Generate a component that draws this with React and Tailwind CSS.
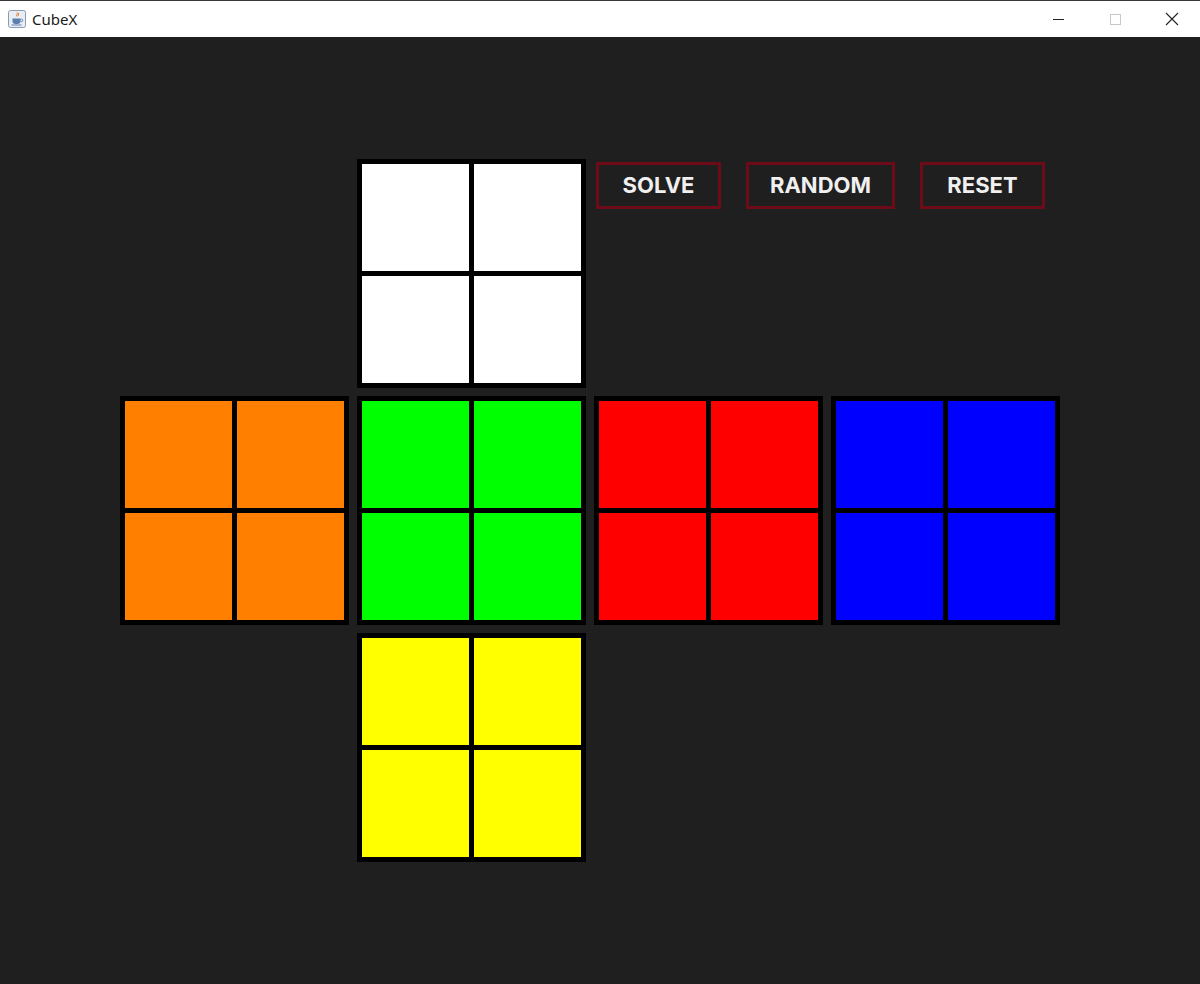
import React from 'react';

const faces = [
  { color: 'bg-[#ffffff]', col: 'col-start-2', row: 'row-start-1' },
  { color: 'bg-[#ff8000]', col: 'col-start-1', row: 'row-start-2' },
  { color: 'bg-[#00ff00]', col: 'col-start-2', row: 'row-start-2' },
  { color: 'bg-[#ff0000]', col: 'col-start-3', row: 'row-start-2' },
  { color: 'bg-[#0000ff]', col: 'col-start-4', row: 'row-start-2' },
  { color: 'bg-[#ffff00]', col: 'col-start-2', row: 'row-start-3' },
];

const Face = ({ color, col, row }) => (
  <div className={`${col} ${row} grid grid-cols-2 grid-rows-2 gap-[5px] bg-black p-[5px]`}>
    {[0, 1, 2, 3].map((i) => (
      <div key={i} className={`${color}`} />
    ))}
  </div>
);

const JavaIcon = () => (
  <svg width="18" height="18" viewBox="0 0 18 18">
    <rect x="0.5" y="0.5" width="17" height="17" rx="2" fill="#e9eef5" stroke="#8a9bb0" />
    <path d="M9 2.5c1.5 1.5-1.5 2.5 0 4M10.5 3c1 1-1 2 0 3" stroke="#e07020" strokeWidth="1" fill="none" />
    <path d="M4.5 8.5h8v2.5a3 3 0 0 1-3 3h-2a3 3 0 0 1-3-3z" fill="#5b7fb0" />
    <path d="M12.5 9.2h1a1.2 1.2 0 0 1 0 2.4h-1" stroke="#5b7fb0" strokeWidth="1" fill="none" />
    <path d="M3.5 15h10" stroke="#5b7fb0" strokeWidth="1" />
  </svg>
);

export default function App() {
  return (
    <div className="flex h-[984px] w-[1200px] flex-col overflow-hidden bg-[#1f1f1f] font-['Inter',sans-serif]">
      {/* Title bar */}
      <div className="flex h-[37px] shrink-0 items-center justify-between border-t border-[#3a3a3a] bg-white">
        <div className="flex items-center gap-[6px] pl-[8px]">
          <JavaIcon />
          <span className="font-['Noto_Sans',sans-serif] text-[15px] text-[#1a1a1a]">CubeX</span>
        </div>
        <div className="flex h-full items-center">
          <div className="flex h-full w-[57px] items-center justify-center">
            <div className="h-px w-[11px] bg-[#222]" />
          </div>
          <div className="flex h-full w-[57px] items-center justify-center">
            <div className="h-[11px] w-[11px] border border-[#c8c8c8]" />
          </div>
          <div className="flex h-full w-[56px] items-center justify-center">
            <svg width="14" height="14" viewBox="0 0 14 14">
              <path d="M1 1L13 13M13 1L1 13" stroke="#222" strokeWidth="1.1" />
            </svg>
          </div>
        </div>
      </div>

      {/* Cube net */}
      <div className="pl-[120px] pt-[122px]">
        <div className="grid grid-cols-[repeat(4,229px)] grid-rows-[repeat(3,229px)] gap-[8px]">
          {faces.map((f, i) => (
            <Face key={i} {...f} />
          ))}
          <div className="col-start-3 col-span-2 row-start-1 flex items-start gap-[25px] pl-[2px] pt-[3px]">
            {['SOLVE', 'RANDOM', 'RESET'].map((label) => (
              <button
                key={label}
                className={`flex h-[47px] items-center justify-center border-[3px] border-[#6e0b19] bg-transparent text-[22px] font-bold text-[#f0f0f0] ${
                  label === 'RANDOM' ? 'w-[149px]' : 'w-[125px]'
                }`}
              >
                {label}
              </button>
            ))}
          </div>
        </div>
      </div>
    </div>
  );
}
